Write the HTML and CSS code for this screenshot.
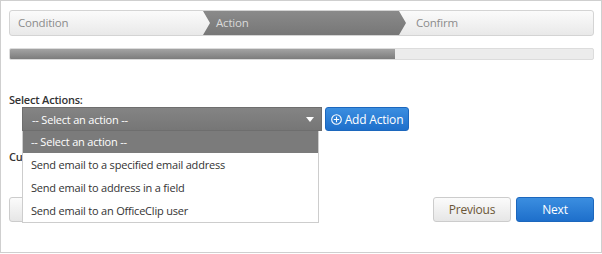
FILE: index.html
```html
<!DOCTYPE html>
<html lang="en">
<head>
    <meta charset="UTF-8">
    <title>Workflow Wizard</title>
    <link rel="stylesheet" href="styles.css">
</head>
<body>
    <div class="wizard">
        <div class="steps">
            <div class="step step-first">Condition</div>
            <div class="step step-active">Action</div>
            <div class="step step-last">Confirm</div>
        </div>
        <div class="progress">
            <div class="progress-fill" style="width: 66%"></div>
        </div>

        <div class="section">
            <label class="control-label">Select Actions:</label>
            <div class="action-row">
                <div class="select-wrap">
                    <div class="select-box">
                        <span>-- Select an action --</span>
                        <span class="caret"></span>
                    </div>
                    <ul class="dropdown">
                        <li class="selected">-- Select an action --</li>
                        <li>Send email to a specified email address</li>
                        <li>Send email to address in a field</li>
                        <li>Send email to an OfficeClip user</li>
                    </ul>
                </div>
                <button class="btn btn-primary btn-add">
                    <svg width="11" height="11" viewBox="0 0 11 11">
                        <circle cx="5.5" cy="5.5" r="4.8" fill="none" stroke="#fff" stroke-width="1.1"/>
                        <path d="M5.5 2.8v5.4M2.8 5.5h5.4" stroke="#fff" stroke-width="1.1"/>
                    </svg>
                    Add Action
                </button>
            </div>
            <label class="control-label label-custom">Custom Actions:</label>
        </div>

        <div class="footer">
            <button class="btn btn-default">Cancel</button>
            <div class="footer-right">
                <button class="btn btn-default btn-prev">Previous</button>
                <button class="btn btn-primary">Next</button>
            </div>
        </div>
    </div>
</body>
</html>
```

FILE: styles.css
```css
body {
    margin: 0;
    padding: 0;
    font-family: "Open Sans", Arial, sans-serif;
    font-size: 11px;
    letter-spacing: -0.2px;
    color: #333;
}
* {box-sizing: border-box;}
.wizard {
    width: 602px;
    height: 253px;
    border: 1px solid #cfcfcf;
    padding: 9px 7px 0 8px;
}
.steps {
    display: flex;
    height: 26px;
    border: 1px solid #d4d4d4;
    border-radius: 3px;
    background: linear-gradient(#fbfbfb, #e9e9e9);
    overflow: hidden;
}
.step {
    line-height: 24px;
    color: #8c8c8c;
    font-size: 11.5px;
}
.step-first {
    width: 193px;
    padding-left: 8px;
}
.step-active {
    position: relative;
    z-index: 1;
    width: 203px;
    margin-right: -7px;
    padding-left: 13px;
    color: #dadada;
    background: linear-gradient(#8a8a8a, #777);
    clip-path: polygon(0 0, calc(100% - 7px) 0, 100% 50%, calc(100% - 7px) 100%, 0 100%, 7px 50%);
}
.step-last {
    flex: 1;
    padding-left: 17px;
}
.progress {
    margin-top: 12px;
    height: 12px;
    border: 1px solid #dcdcdc;
    border-radius: 2px;
    background: #ececec;
    overflow: hidden;
}
.progress-fill {
    height: 100%;
    background: linear-gradient(#a3a3a3, #7c7c7c);
}
.section {
    margin-top: 32px;
}
.control-label {
    display: block;
    font-weight: 600;
    line-height: 16px;
    color: #333;
}
.action-row {
    display: flex;
    gap: 3px;
    margin-top: -1px;
    padding-left: 13px;
}
.select-wrap {
    position: relative;
    width: 300px;
}
.select-box {
    display: flex;
    justify-content: space-between;
    align-items: center;
    height: 24px;
    padding: 0 7px 0 9px;
    background: linear-gradient(#848484, #767676);
    border: 1px solid #6e6e6e;
    color: #fff;
}
.caret {
    width: 0;
    height: 0;
    border-left: 4px solid transparent;
    border-right: 4px solid transparent;
    border-top: 5px solid #fff;
}
.dropdown {
    position: absolute;
    top: 24px;
    left: 0;
    z-index: 10;
    width: 297px;
    margin: 0;
    padding: 0;
    list-style: none;
    background: #fff;
    border: 1px solid #cdcdcd;
    border-top: none;
}
.dropdown li {
    height: 23px;
    line-height: 23px;
    padding-left: 8px;
    color: #333;
}
.dropdown li.selected {
    height: 22px;
    line-height: 22px;
    background: #7b7b7b;
    color: #fff;
}
.btn {
    display: inline-flex;
    align-items: center;
    justify-content: center;
    height: 25px;
    border: 1px solid #ccc;
    border-radius: 3px;
    font-family: inherit;
    font-size: 12px;
    letter-spacing: -0.2px;
    cursor: pointer;
}
.btn-primary {
    background: linear-gradient(#3b8ee0, #1e6fcb);
    border-color: #1c67bd;
    color: #fff;
}
.btn-default {
    background: linear-gradient(#fbfbfb, #e6e6e6);
    color: #6a5535;
}
.btn-add {
    height: 24px;
    width: 84px;
    gap: 3px;
    padding: 0;
}
.label-custom {
    margin-top: 18px;
}
.footer {
    display: flex;
    justify-content: space-between;
    margin-top: 32px;
}
.footer .btn {
    width: 78px;
}
.footer-right {
    display: flex;
    gap: 5px;
}
```
